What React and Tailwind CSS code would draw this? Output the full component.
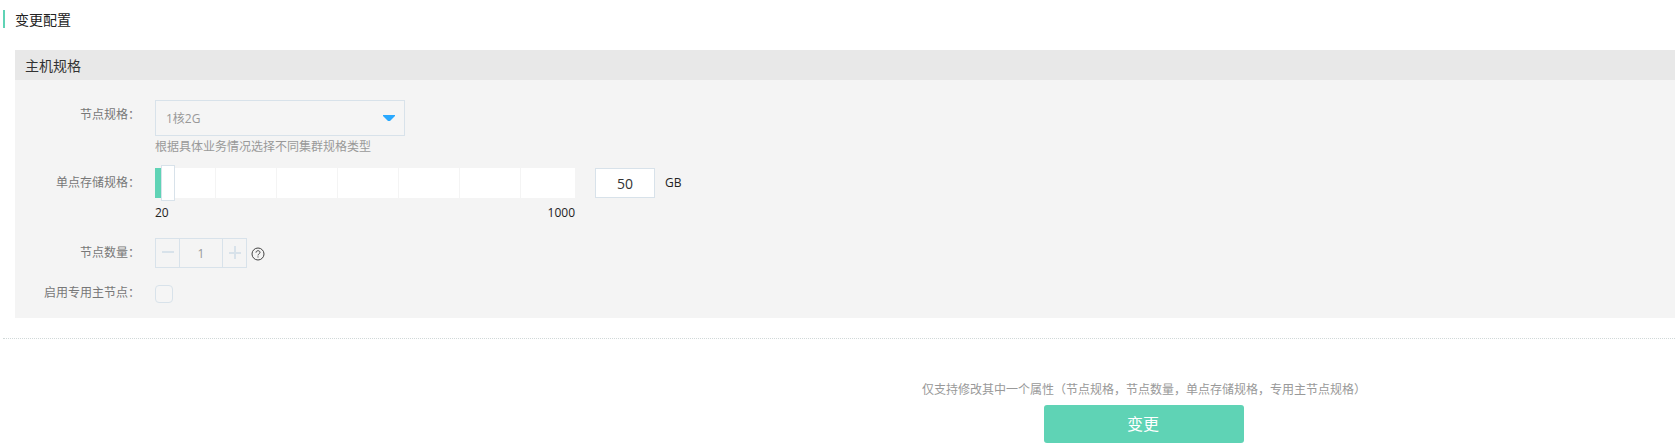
const ticks = [0, 1, 2, 3, 4, 5];

function Row({ label, labelClass, className, children }) {
  return (
    <div className={`flex items-start ${className}`}>
      <div className={`w-[125px] shrink-0 text-right leading-5 text-[#777] ${labelClass}`}>{label}</div>
      <div className="ml-[15px]">{children}</div>
    </div>
  );
}

function Slider() {
  return (
    <div className="w-[420px]">
      <div className="relative flex h-[30px] bg-white">
        {ticks.map((t) => (
          <div key={t} className="h-full w-[61px] shrink-0 border-r border-[#f4f4f4]" />
        ))}
        <div className="absolute top-0 left-0 h-full w-[13px] bg-[#5fd3b5]" />
        <div className="absolute -top-[3px] left-[6px] h-9 w-[14px] border border-[#d8e2ea] bg-white" />
      </div>
      <div className="mt-[5px] flex justify-between leading-5 text-[#222]">
        <span>20</span>
        <span>1000</span>
      </div>
    </div>
  );
}

function Stepper() {
  return (
    <div className="flex h-[30px] w-[92px] border border-[#d8e2ea]">
      <div className="flex w-[23px] items-center justify-center">
        <div className="h-[2px] w-3 -translate-y-px bg-[#d8e2ea]" />
      </div>
      <div className="w-[44px] border-x border-[#d8e2ea] text-center leading-[30px] text-[#999]">1</div>
      <div className="flex flex-1 items-center justify-center">
        <svg width="12" height="14" viewBox="0 0 12 14" stroke="#d8e2ea" strokeWidth="2">
          <path d="M0 7H12M6 0V13" />
        </svg>
      </div>
    </div>
  );
}

function HelpIcon() {
  return (
    <svg className="mt-px" width="14" height="14" viewBox="0 0 14 14" fill="none" stroke="#444">
      <circle cx="7" cy="7" r="6" />
      <path d="M5 5.6C5 3.1 9 3.1 9 5.4C9 6.8 7 6.9 7 8.4M7 9.4V10.5" />
    </svg>
  );
}

export default function App() {
  return (
    <div className="h-[448px] w-full overflow-hidden bg-white font-['Open_Sans','Noto_Sans_CJK_SC',sans-serif] text-xs">
      <div className="ml-[3px] w-[2282px]">
        <div className="pt-[10px]">
          <h1 className="h-[18px] border-l-2 border-[#5fd3b5] pl-[10px] text-sm leading-[19px] text-[#222]">变更配置</h1>
        </div>
        <section className="mt-[22px] ml-3 h-[268px] bg-[#f4f4f4]">
          <h2 className="h-[30px] bg-[#e8e8e8] pl-[10px] text-sm leading-8 text-[#333]">主机规格</h2>
          <Row label="节点规格：" labelClass="pt-[5px]" className="h-[68px] pt-5">
            <div className="flex h-9 w-[250px] items-center justify-between border border-[#d8e2ea] bg-[#f5f5f5] pr-[9px] pl-[10px] text-[#999]">
              <span className="pt-[2px]">1核2G</span>
              <svg width="12" height="6" viewBox="0 0 12 6" fill="#2aa9ff">
                <path d="M0 0H12V1L7 6H5L0 1Z" />
              </svg>
            </div>
            <div className="pt-px leading-5 text-[#999]">根据具体业务情况选择不同集群规格类型</div>
          </Row>
          <Row label="单点存储规格：" labelClass="pt-[5px]" className="mt-5 h-[70px]">
            <div className="flex">
              <Slider />
              <div className="ml-5 h-[30px] w-[60px] border border-[#d8e2ea] bg-white text-center text-sm leading-[30px] text-[#333]">50</div>
              <div className="ml-[10px] leading-[30px] text-[#222]">GB</div>
            </div>
          </Row>
          <Row label="节点数量：" labelClass="pt-[5px]" className="h-[47px]">
            <div className="flex items-center gap-1">
              <Stepper />
              <HelpIcon />
            </div>
          </Row>
          <Row label="启用专用主节点：" labelClass="-mt-[2px]" className="">
            <div className="size-[18px] rounded-[4px] border border-[#d8e2ea] bg-[#f5f5f5]" />
          </Row>
        </section>
        <div className="mt-5 border-t border-dotted border-[#d0d8d8]" />
        <div className="flex flex-col items-center pt-[41px]">
          <p className="leading-5 text-[#999]">仅支持修改其中一个属性（节点规格，节点数量，单点存储规格，专用主节点规格）</p>
          <button className="mt-[5px] h-[38px] w-[200px] rounded-[3px] bg-[#5fd3b5] pr-[2px] text-base text-white">变更</button>
        </div>
      </div>
    </div>
  );
}
